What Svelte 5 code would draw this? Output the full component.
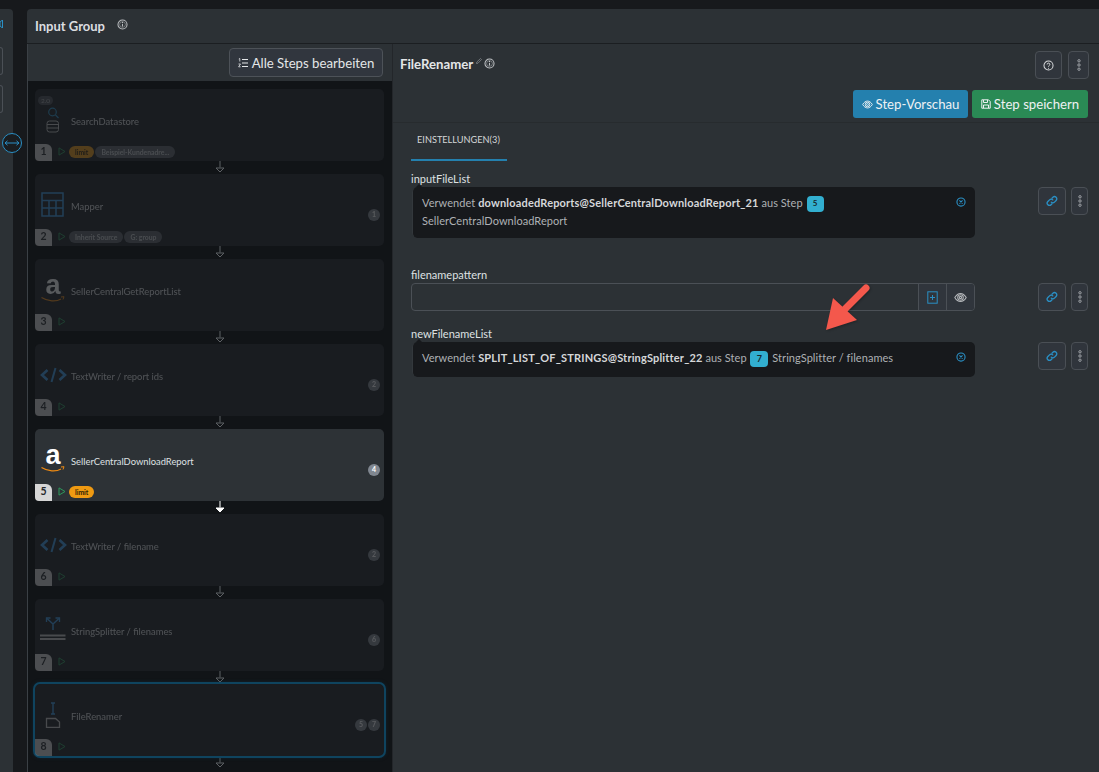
<script>
  const steps = [
    { n: 1, name: 'SearchDatastore', icon: 'search', pills: [['limit', 'orange'], ['Beispiel-Kundenadre...', '']], deps: [], version: '2.0' },
    { n: 2, name: 'Mapper', icon: 'table', pills: [['Inherit Source', ''], ['G: group', '']], deps: [1] },
    { n: 3, name: 'SellerCentralGetReportList', icon: 'amazon', pills: [], deps: [] },
    { n: 4, name: 'TextWriter / report ids', icon: 'code', pills: [], deps: [2] },
    { n: 5, name: 'SellerCentralDownloadReport', icon: 'amazon', pills: [['limit', 'orange']], deps: [4], active: true },
    { n: 6, name: 'TextWriter / filename', icon: 'code', pills: [], deps: [2] },
    { n: 7, name: 'StringSplitter / filenames', icon: 'split', pills: [], deps: [6] },
    { n: 8, name: 'FileRenamer', icon: 'rename', pills: [], deps: [5, 7], selected: true }
  ];
</script>

{#snippet info(size)}
  <svg width={size} height={size} viewBox="0 0 16 16" fill="none" stroke="currentColor"><circle cx="8" cy="8" r="6.6" stroke-width="1.5"/><circle cx="8" cy="8" r="4.2" stroke-width=".7"/><path d="M8 7v4" stroke-width="1.6"/><circle cx="8" cy="5" r=".9" fill="currentColor" stroke="none"/></svg>
{/snippet}
{#snippet eye(w)}
  <svg width={w} height={w} viewBox="0 0 16 16" fill="none" stroke="currentColor" stroke-width="1.3"><path d="M1 8c2-3.4 4.4-5 7-5s5 1.6 7 5c-2 3.4-4.4 5-7 5s-5-1.6-7-5z"/><circle cx="8" cy="8" r="3.4"/><circle cx="8" cy="8" r="1.4"/></svg>
{/snippet}
{#snippet link()}
  <svg width="12" height="12" viewBox="0 0 16 16" fill="none" stroke="#2a8fc4" stroke-width="1.8" stroke-linecap="round"><path d="M7 9.500a3 3 0 0 0 4.300 0l2.200-2.200a3 3 0 0 0-4.300-4.300L8 4.200"/><path d="M9 6.500a3 3 0 0 0-4.300 0L2.500 8.700a3 3 0 0 0 4.300 4.300L8 11.800"/></svg>
{/snippet}
{#snippet dots()}
  <svg width="4" height="12" viewBox="0 0 4 12" fill="none" stroke="#a9adb1" stroke-width=".9"><circle cx="2" cy="1.800" r="1.200"/><circle cx="2" cy="6" r="1.200"/><circle cx="2" cy="10.200" r="1.200"/></svg>
{/snippet}
{#snippet clear()}
  <svg class="clear" width="10" height="10" viewBox="0 0 16 16" fill="none" stroke="#2a8fc4" stroke-width="1.800"><circle cx="8" cy="8" r="6.500"/><path d="M5.500 5.500l5 5M10.500 5.500l-5 5"/></svg>
{/snippet}
{#snippet actions()}
  <div class="actions">
    <button class="tool link">{@render link()}</button>
    <button class="tool more">{@render dots()}</button>
  </div>
{/snippet}

<div class="page">
  <aside class="strip">
    <svg class="strip-mark" width="3" height="8" viewBox="0 0 3 8"><path d="M0 2l2.500-2v8L0 6z" fill="none" stroke="#2a8fc4"/></svg>
    <div class="strip-btn"></div>
    <div class="strip-btn"></div>
  </aside>
  <div class="resize">
    <svg width="16" height="6" viewBox="0 0 16 6" fill="none" stroke="#2a8fc4"><path d="M1 3h14M3.500 .8L1 3l2.500 2.200M12.500 .8L15 3l-2.500 2.200"/></svg>
  </div>

  <main class="panel">
    <header class="group-head">
      <h1>Input Group</h1>
      <span class="group-info">{@render info(11)}</span>
    </header>
    <div class="columns">
      <section class="left">
        <div class="left-tools">
          <button class="edit-all">
            <svg width="10" height="10" viewBox="0 0 10 10" fill="none" stroke="#e4e6e8" stroke-width="1.100"><path d="M4 1.500h6M4 5h6M4 8.500h6"/><path d="M.8 1l1-.5v3M.5 6h2L.6 8.800h2" stroke-width=".8"/></svg>
            Alle Steps bearbeiten
          </button>
        </div>
        <div class="list">
          {#each steps as s}
            <article class="card" class:active={s.active} class:selected={s.selected}>
              <div class="inner">
                {#if s.version}<span class="version">{s.version}</span>{/if}
                <div class="main">
                  <div class="icon">
                    {#if s.icon === 'search'}
                      <svg width="16" height="26" viewBox="0 0 16 26" fill="none" stroke-width="1.200"><circle cx="7.500" cy="5" r="3.800" stroke="#2a8fc4"/><path d="M10.500 8l3 3" stroke="#2a8fc4"/><rect x="2" y="14" width="11.500" height="11" rx="2.500" stroke="#c6c6c6" stroke-width="1"/><path d="M2 17.500h11.500M2 21h11.500" stroke="#c6c6c6" stroke-width="1"/></svg>
                    {:else if s.icon === 'table'}
                      <svg width="24" height="26" viewBox="0 0 24 26" fill="none" stroke="#3a9be8" stroke-width="1.500"><rect x="1" y="1" width="21" height="23"/><path d="M1 8.500h21M1 16h21M8 8.500V24M15 8.500V24"/></svg>
                    {:else if s.icon === 'amazon'}
                      <div class="amazon">
                        <span>a</span>
                        <svg width="24" height="7" viewBox="0 0 24 7" fill="none"><path d="M.5 1.500C7 5.500 15 6 20 3" stroke="#ef8a12" stroke-width="1.300"/><path d="M20 1l3-.3-1 2.800" stroke="#ef8a12" stroke-width="1"/></svg>
                      </div>
                    {:else if s.icon === 'code'}
                      <svg width="27" height="16" viewBox="0 0 27 16" fill="none" stroke="#3a9be8" stroke-width="2.600"><path d="M7.500 3L2 8l5.500 5M19.500 3L25 8l-5.500 5"/><path d="M15.500 1l-4 14" stroke-width="2"/></svg>
                    {:else if s.icon === 'split'}
                      <svg width="26" height="26" viewBox="0 0 26 26" fill="none"><path d="M13 13V7L7 1.500M13 7l6-5.500" stroke="#3a9be8" stroke-width="1.500"/><path d="M6.500 5V1h4M15.500 1h4v4" stroke="#3a9be8" stroke-width="1.300"/><path d="M0 18.500h25.500M0 22h25.500" stroke="#c6c6c6" stroke-width="2"/></svg>
                    {:else if s.icon === 'rename'}
                      <svg width="16" height="26" viewBox="0 0 16 26" fill="none"><path d="M8 1v11M6 1h4M6 12h4" stroke="#3a9be8" stroke-width="1.400"/><path d="M1.500 16.500h9l4 3.500v5.500h-13z" stroke="#c6c6c6" stroke-width="1.300"/></svg>
                    {/if}
                  </div>
                  <span class="name">{s.name}</span>
                  {#if s.deps.length}
                    <div class="deps">
                      {#each s.deps as d}<span class="dep">{d}</span>{/each}
                    </div>
                  {/if}
                </div>
                <div class="foot">
                  <span class="num">{s.n}</span>
                  <svg class="play" width="8" height="9" viewBox="0 0 8 9" fill="none" stroke="#2c9a5c" stroke-width="1"><path d="M1 .9L7 4.500 1 8.100z"/></svg>
                  {#each s.pills as p}
                    <span class="pill" class:orange={p[1] === 'orange'}>{p[0]}</span>
                  {/each}
                </div>
              </div>
            </article>
            <div class="conn">
              <svg width="10" height="13" viewBox="0 0 10 13" fill={s.active ? '#fff' : 'none'} stroke={s.active ? '#fff' : '#5d6064'}><path d="M5 0v6.500" fill="none"/><path d="M1 7h8L5 11z"/></svg>
            </div>
          {/each}
        </div>
      </section>

      <section class="right">
        <div class="step-head">
          <div class="title-row">
            <h2>FileRenamer</h2>
            <svg class="pencil" width="6" height="6" viewBox="0 0 6 6" fill="none" stroke="#8b8f93" stroke-width=".7"><path d="M.5 5.500l.3-1.500L4.500.5l1 1L2 5.200z"/></svg>
            <span class="title-info">{@render info(11)}</span>
            <div class="head-tools">
              <button class="tool help"><svg width="11" height="11" viewBox="0 0 16 16" fill="none" stroke="#d5d7d9"><circle cx="8" cy="8" r="6.600" stroke-width="1.500"/><path d="M6 6.500a2 2 0 1 1 3 1.700c-.7.400-1 .8-1 1.500" stroke-width="1.400"/><circle cx="8" cy="12" r=".8" fill="#d5d7d9" stroke="none"/></svg></button>
              <button class="tool more tall">{@render dots()}</button>
            </div>
          </div>
          <div class="cta-row">
            <button class="cta blue">{@render eye(11)} Step-Vorschau</button>
            <button class="cta green">
              <svg width="10" height="10" viewBox="0 0 10 10" fill="none" stroke="currentColor"><path d="M.8.800h6.700l1.700 1.700v6.700H.8z"/><path d="M2.500 1v2.500h4V1M2.500 9V6h5v3"/></svg>
              Step speichern
            </button>
          </div>
        </div>

        <nav class="tabs"><span class="tab">EINSTELLUNGEN(3)</span></nav>

        <div class="fields">
          <div class="field first">
            <div class="field-body">
              <span class="label">inputFileList</span>
              <div class="ref tall-ref">
                <div class="ref-text">Verwendet <b>downloadedReports@SellerCentralDownloadReport_21</b> aus Step <span class="chip">5</span><br />SellerCentralDownloadReport</div>
                {@render clear()}
              </div>
            </div>
            {@render actions()}
          </div>

          <div class="field second">
            <div class="field-body">
              <span class="label">filenamepattern</span>
              <div class="input">
                <span class="input-space"></span>
                <span class="addon"><svg width="11" height="13" viewBox="0 0 11 13" fill="none" stroke="#2a8fc4"><rect x=".8" y=".8" width="9.400" height="11.400"/><path d="M5.500 4v5M3 6.500h5"/></svg></span>
                <span class="addon">{@render eye(13)}</span>
              </div>
            </div>
            {@render actions()}
          </div>

          <div class="field third">
            <div class="field-body">
              <span class="label">newFilenameList</span>
              <div class="ref short-ref">
                <div class="ref-text">Verwendet <b>SPLIT_LIST_OF_STRINGS@StringSplitter_22</b> aus Step <span class="chip big">7</span> StringSplitter / filenames</div>
                {@render clear()}
              </div>
            </div>
            {@render actions()}
          </div>
        </div>

        <svg class="arrow" width="50" height="50" viewBox="0 0 50 50"><path d="M41 6L20 27" stroke="#f4584c" stroke-width="7" stroke-linecap="round"/><path d="M1 48L8 16 32 38z" fill="#f4584c"/></svg>
      </section>
    </div>
  </main>
</div>

<style>
  :global(body) { margin: 0; background: #17191c; overflow: hidden; }
  * { box-sizing: border-box; }
  .page {
    position: relative; display: flex; gap: 14px; height: 772px; padding-top: 9px;
    background: #17191c; font-family: "Lato", "Noto Sans", sans-serif; color: #d9dbdd; overflow: hidden;
  }
  button { font-family: inherit; cursor: pointer; padding: 0; }

  .strip {
    flex: 0 0 13px; background: #2c3135; border-top-right-radius: 4px;
    display: flex; flex-direction: column; padding-top: 11px;
  }
  .strip-mark { display: block; height: 8px; margin-bottom: 19px; }
  .strip-btn { width: 3px; height: 28px; border: 1px solid #4b5056; border-left: 0; border-radius: 0 3px 3px 0; margin-bottom: 10px; }
  .resize {
    position: absolute; left: 2px; top: 133px; width: 20px; height: 20px; border-radius: 50%;
    border: 1px solid #2a8fc4; display: flex; align-items: center; justify-content: center; background: #1a1d20;
  }

  .panel { flex: 1; min-width: 0; background: #2c3135; border-top-left-radius: 4px; display: flex; flex-direction: column; }
  .group-head { height: 35px; flex: none; display: flex; align-items: center; padding: 0 8px; border-bottom: 1px solid #1b1e21; }
  h1 { margin: 0; font-size: 13px; font-weight: 700; color: #dcdee0; }
  .group-info { margin-left: 12px; display: flex; color: #b9bcbf; margin-top: -3px; }
  .columns { flex: 1; display: flex; min-height: 0; }

  .left { flex: 0 0 366px; display: flex; flex-direction: column; border-left: 1px solid #3b4045; border-right: 1px solid #23262a; }
  .left-tools { height: 37px; flex: none; display: flex; align-items: flex-start; justify-content: flex-end; padding: 4px 9px 0 0; }
  .edit-all {
    width: 154px; height: 29px; background: #31363e; border: 1px solid #4d5258; border-radius: 4px;
    color: #e4e6e8; font-size: 13.200px; display: flex; align-items: center; justify-content: center; gap: 4px;
  }
  .list { flex: 1; background: #111417; padding: 8px 8px 0 7px; overflow: hidden; }
  .card { height: 72px; border-radius: 5px; background: #191c20; position: relative; }
  .card.active { background: #2d3236; }
  .card.selected { outline: 2px solid #0f445f; outline-offset: 0; box-shadow: 0 0 5px #0d3a52; }
  .inner { height: 100%; display: flex; flex-direction: column; opacity: .27; position: relative; }
  .active .inner { opacity: 1; }
  .version {
    position: absolute; left: 3px; top: 7px; height: 9px; padding: 0 3px; border-radius: 5px;
    background: #4a4e54; font-size: 6.500px; line-height: 9px; color: #aeb1b4;
  }
  .main { flex: 1; display: flex; align-items: center; padding: 9px 4px 0 0; min-height: 0; }
  .icon { flex: 0 0 36px; display: flex; justify-content: center; align-items: center; color: #fff; margin-top: -2px; }
  .amazon { display: flex; flex-direction: column; align-items: center; height: 28px; width: 26px; position: relative; }
  .amazon span { font: 700 27px/19px "Liberation Sans", sans-serif; color: #fff; height: 20px; }
  .amazon svg { display: block; }
  .name { font-size: 9.400px; color: #dfe1e3; white-space: nowrap; flex: 1; }
  .deps { display: flex; gap: 1px; margin-top: 18px; }
  .dep {
    width: 12px; height: 12px; border-radius: 50%; background: #808790; color: #fff;
    font-size: 7px; font-weight: 700; line-height: 11px; text-align: center;
  }
  .foot { height: 17px; flex: none; display: flex; align-items: flex-start; }
  .num {
    width: 17px; height: 17px; background: #d6d6d6; color: #25282b; border-radius: 0 6px 0 4px;
    font-size: 10.500px; font-weight: 700; text-align: center; line-height: 14px;
  }
  .play { margin: 3px 3px 0 6px; }
  .pill {
    height: 12px; padding: 0 6px; border-radius: 6px; background: #5c6168; color: #c9cbce;
    font-size: 6.800px; font-weight: 700; line-height: 12px; margin: 2px 1px 0 0;
  }
  .pill.orange { background: #ef9a12; color: #2c1c05; }
  .conn { height: 13px; display: flex; justify-content: center; padding-left: 20px; }
  .conn svg { display: block; }

  .right { flex: 1; min-width: 0; position: relative; }
  .step-head { height: 79px; border-bottom: 1px solid #272b2e; padding: 7px 11px 0 7px; }
  .title-row { display: flex; align-items: flex-start; height: 39px; }
  h2 { margin: 5px 0 0; font-size: 13.200px; font-weight: 700; color: #e4e6e8; }
  .pencil { margin: 7px 0 0 3px; }
  .title-info { margin: 7px 0 0 2px; color: #c0c3c6; display: flex; }
  .head-tools { margin: 0 -1px 0 auto; display: flex; gap: 6px; }
  .tool {
    background: #30353c; border: 1px solid #4a4f55; border-radius: 4px; height: 28px;
    display: flex; align-items: center; justify-content: center;
  }
  .help { width: 27px; }
  .more { width: 17px; }
  .more.tall { width: 21px; }
  .cta-row { display: flex; justify-content: flex-end; gap: 4px; height: 28px; }
  .cta {
    height: 28px; width: 115px; border: 0; border-radius: 3px; color: #eef1f3; font-size: 13.200px;
    display: flex; align-items: center; justify-content: center; gap: 3px;
  }
  .cta.blue { background: #2480ae; }
  .cta.green { background: #2a8a55; width: 116px; }

  .tabs { height: 38px; padding-left: 18px; }
  .tab {
    display: block; width: 96px; height: 38px; padding: 11px 0 0 6px; border-bottom: 2px solid #2480ae;
    font-size: 9.200px; color: #d4d6d8; white-space: nowrap;
  }

  .fields { padding: 12px 11px 0 18px; }
  .field { display: flex; align-items: flex-start; }
  .field-body { width: 564px; }
  .label { display: block; height: 14px; line-height: 12px; font-size: 11px; color: #dfe1e3; }
  .field.second { margin-top: 31px; }
  .field.third { margin-top: 17px; }
  .actions { display: flex; gap: 5px; margin: 14px 0 0 63px; }
  .link { width: 28px; }

  .ref {
    position: relative; margin-left: 1px; background: #17191c; border-radius: 5px; padding: 0 9px 0 9px; display: flex;
    border-left: 1px solid #33383c; font-size: 11px; color: #aeb1b4; letter-spacing: .05px;
  }
  .ref::before {
    content: ""; position: absolute; left: 3px; top: -3px; border: 3px solid transparent; border-top: 0;
    border-bottom-color: #17191c;
  }
  .tall-ref { height: 51px; padding-top: 7px; }
  .short-ref { height: 35px; padding-top: 7px; }
  .ref-text { line-height: 17px; flex: 1; white-space: nowrap; }
  .ref-text b { color: #d5d7d9; font-weight: 700; letter-spacing: .17px; }
  .chip {
    display: inline-block; width: 17px; height: 16px; border-radius: 4px; background: #32afd0; color: #16282e;
    text-align: center; font-size: 8px; font-weight: 700; line-height: 15px; margin: 0 1px; vertical-align: middle;
  }
  .chip.big { width: 18px; font-size: 9px; }
  .clear { flex: none; margin: 3px 0 0 0; }

  .input { height: 28px; display: flex; border: 1px solid #4b5056; border-radius: 4px; }
  .input-space { flex: 1; }
  .addon { width: 28px; display: flex; align-items: center; justify-content: center; border-left: 1px solid #4b5056; background: #30353c; color: #b5b8bb; }
  .addon:last-child { border-radius: 0 3px 3px 0; }

  .arrow { position: absolute; left: 432px; top: 238px; filter: drop-shadow(1px 1px 1px rgba(0,0,0,.25)); }
</style>
